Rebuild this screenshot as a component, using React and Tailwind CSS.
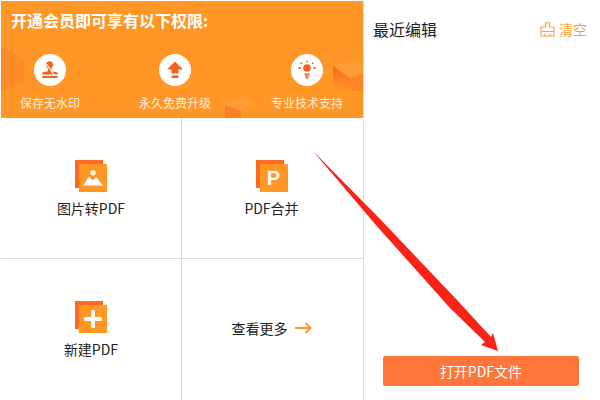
import React from 'react';

const font = { fontFamily: '"Noto Sans CJK SC", "Liberation Sans", sans-serif' };

function Perk({ label, children, className }) {
  return (
    <div className={`flex w-[72px] flex-col items-center ${className}`}>
      <div className="flex h-8 w-8 items-center justify-center rounded-full bg-white">{children}</div>
      <span className="mt-[9px] whitespace-nowrap text-[12px] leading-[16px] text-[#ffeeda]">{label}</span>
    </div>
  );
}

function ToolIcon({ children }) {
  return (
    <div className="h-[32px] w-[32px]">
      <div className="h-7 w-7 bg-[#ff6a22]" />
      <div className="ml-1 -mt-6 flex h-7 w-7 items-center justify-center bg-[#ff9626]">{children}</div>
    </div>
  );
}

export default function App() {
  return (
    <div className="relative flex h-[400px] w-[600px] overflow-hidden bg-white text-[#222]" style={font}>
      <div className="flex h-full w-[364px] flex-col border-r border-[#dcdcdc] pl-px pt-px">
        <div className="relative h-[117px] w-full overflow-hidden bg-[#ff9626]">
          <svg className="absolute inset-0" width="362" height="117" viewBox="0 0 362 117">
            <defs>
              <linearGradient id="cubeFade" x1="0" y1="0" x2="0" y2="1">
                <stop offset="0" stopColor="#f9671f" />
                <stop offset="1" stopColor="#ff9626" />
              </linearGradient>
            </defs>
            <polygon points="0,45 23,58 23,82 0,90" fill="#ff8a28" />
            <polygon points="332,65 350,58 362,63 362,72 350,78" fill="#ff9c33" />
            <polygon points="332,65 350,78 350,90 332,90" fill="url(#cubeFade)" />
            <polygon points="350,78 362,72 362,90 350,90" fill="#ff8425" />
            <polygon points="224,104 240,95 255,102 240,110" fill="#ff9c33" />
            <polygon points="224,104 240,110 240,117 224,117" fill="#fb8022" />
          </svg>
          <div className="relative pl-[10px] pt-[9px] text-[16px] font-bold leading-[20px] text-white">开通会员即可享有以下权限:</div>
          <div className="relative mt-[24px] flex pl-[13px]">
            <Perk label="保存无水印">
              <svg width="18" height="18" viewBox="0 0 18 18" fill="#f4601f">
                <circle cx="8.500" cy="3.800" r="3.500" />
                <path d="M7 6h3l1 4.200 5.700 1.300v2H1.300v-2l5.500-1.300z" />
                <rect x="1.300" y="15" width="15.400" height="2" />
                <path d="M5.500 3 13.500 14.500" stroke="#fff" strokeWidth="1.300" fill="none" />
              </svg>
            </Perk>
            <Perk label="永久免费升级" className="ml-[53px]">
              <svg width="18" height="18" viewBox="0 0 18 18" fill="#f4601f">
                <path d="M9 0.500 17 8.500H12.500V12.500H5.500V8.500H1z" />
                <rect x="5.500" y="14.500" width="7" height="2.500" />
              </svg>
            </Perk>
            <Perk label="专业技术支持" className="ml-[60px]">
              <svg width="20" height="20" viewBox="0 0 20 20" fill="none" stroke="#f4601f" strokeWidth="1.300">
                <circle cx="10" cy="8" r="3.800" fill="#f4601f" stroke="none" />
                <path d="M10 0.500v2M3.500 2.500 5 4M16.500 2.500 15 4M1 8h3M16 8h3M7.500 14h5M8 16h4M8.800 18h2.400" />
              </svg>
            </Perk>
          </div>
        </div>

        <div className="grid flex-1 grid-cols-[181px_181px] grid-rows-[141px_141px]">
          <div className="flex flex-col items-center border-r border-b border-[#dcdcdc] pt-[42px]">
            <ToolIcon>
              <svg width="20" height="16" viewBox="0 0 20 16" fill="#fff">
                <circle cx="10" cy="2.800" r="2.600" />
                <path d="M0 15.500 6 6.500 9.500 10.500 13 7 20 15.500z" />
              </svg>
            </ToolIcon>
            <span className="mt-[7px] text-[14px] leading-[18px]">图片转PDF</span>
          </div>
          <div className="flex flex-col items-center border-b border-[#dcdcdc] pr-[2px] pt-[42px]">
            <ToolIcon>
              <span className="text-[20px] font-bold leading-none text-white" style={{ fontFamily: '"Liberation Sans", sans-serif' }}>P</span>
            </ToolIcon>
            <span className="mt-[7px] text-[14px] leading-[18px]">PDF合并</span>
          </div>
          <div className="flex flex-col items-center border-r border-[#dcdcdc] pt-[42px]">
            <ToolIcon>
              <svg width="18" height="18" viewBox="0 0 18 18" fill="#fff">
                <rect x="0" y="7" width="18" height="4" rx="1.500" />
                <rect x="7" y="0" width="4" height="18" rx="1.500" />
              </svg>
            </ToolIcon>
            <span className="mt-[7px] text-[14px] leading-[18px]">新建PDF</span>
          </div>
          <div className="flex items-center justify-center pb-[3px] pr-[2px]">
            <span className="text-[14px] leading-[18px]">查看更多</span>
            <svg className="ml-[7px]" width="17" height="12" viewBox="0 0 17 12" fill="none" stroke="#ff9626" strokeWidth="1.800">
              <path d="M0 6H15.500M10.500 1 15.500 6 10.500 11" />
            </svg>
          </div>
        </div>
      </div>

      <div className="flex flex-1 flex-col pl-[9px] pr-[13px]">
        <div className="mt-[18px] flex items-center justify-between">
          <span className="text-[16px] leading-[22px]">最近编辑</span>
          <div className="flex items-center text-[14px] leading-[18px] text-[#ff9f33]">
            <svg width="15" height="15" viewBox="0 0 15 15" fill="none" stroke="#ff9f33" strokeWidth="1.100">
              <path d="M5.500 5V0.800H9.500V5H14V14H1V5zM1 9.500H14M5 14V11.500M10 14V11.500" />
            </svg>
            <span className="ml-1">清空</span>
          </div>
        </div>
        <button className="ml-[10px] mr-[8px] mt-auto mb-[14px] h-[30px] rounded-[2px] bg-[#ff763b] text-[14px] text-white">打开PDF文件</button>
      </div>

      <svg className="pointer-events-none absolute inset-0" width="600" height="400" viewBox="0 0 600 400">
        <polygon points="312.500,150.500 380,219 457,300 491,337 493,333 498,351 481,345 485,342 450,308 375,224" fill="#fb2318" />
      </svg>
    </div>
  );
}
